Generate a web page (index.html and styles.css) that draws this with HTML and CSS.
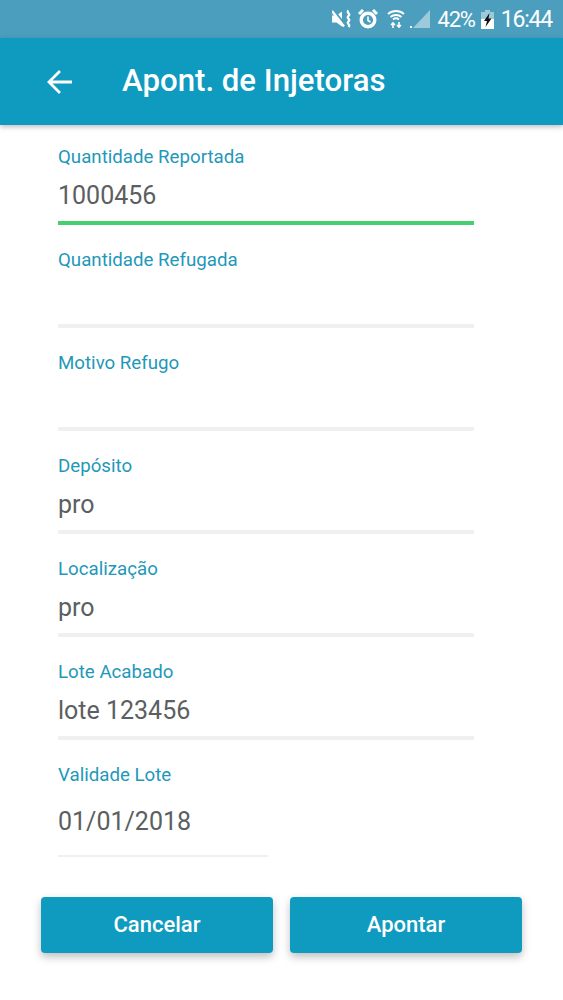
FILE: index.html
```html
<!DOCTYPE html>
<html lang="en">
<head>
  <meta charset="UTF-8" />
  <title>Apont. de Injetoras</title>
  <link rel="stylesheet" href="styles.css">
</head>
<body>
  <div class="status-bar">
    <!-- mute + vibrate -->
    <svg class="icon-mute" width="20" height="20" viewBox="0 0 20 20">
      <path d="M0 6.500h4.500L10 2.500v15l-5.500-4H0z" fill="#fff"/>
      <path d="M1 1 13 16.500" stroke="#4b9ebd" stroke-width="3" fill="none"/>
      <path d="M0 2 12 17.500" stroke="#fff" stroke-width="2.400" fill="none"/>
      <path d="M16.500 1.500c-2.800 2 2.800 3.500 0 5.500s2.800 3.500 0 5.500s2.800 3 0 5.500" stroke="#fff" stroke-width="2.200" fill="none"/>
    </svg>
    <!-- alarm -->
    <svg class="icon-alarm" width="20" height="20" viewBox="0 0 20 20">
      <circle cx="10" cy="11" r="6.800" fill="none" stroke="#fff" stroke-width="3.400"/>
      <path d="M10 7.500v4l2.500 1.500" stroke="#fff" stroke-width="1.600" fill="none"/>
      <path d="M1 5l4-4M19 5l-4-4" stroke="#fff" stroke-width="3" fill="none"/>
    </svg>
    <!-- wifi with arrows -->
    <svg class="icon-wifi" width="18" height="20" viewBox="0 0 18 20">
      <path d="M1 5c4.500-4 11.500-4 16 0M3.500 8c3-2.700 8-2.700 11 0M6 10.500c1.700-1.400 4.300-1.400 6 0" stroke="#fff" stroke-width="1.800" fill="none"/>
      <path d="M6 19v-5M4 16l2-2 2 2M12 13v5M10 16l2 2 2-2" stroke="#fff" stroke-width="1.600" fill="none"/>
    </svg>
    <!-- signal -->
    <svg class="icon-signal" width="20" height="20" viewBox="0 0 20 20">
      <path d="M20 1v18H3z" fill="#fff" opacity="0.45"/>
      <rect x="0" y="17" width="2" height="2" fill="#fff"/>
    </svg>
    <span class="status-text status-pct">42%</span>
    <!-- battery charging -->
    <svg class="icon-battery" width="13" height="20" viewBox="0 0 13 20">
      <path d="M4 1h5v2h4v17H0V3h4z" fill="#fff" opacity="0.45"/>
      <path d="M0 10h13v10H0z" fill="#fff"/>
      <path d="M8.500 4 3 12h3l-1.500 6L10.500 9.500h-3z" fill="#111"/>
    </svg>
    <span class="status-text">16:44</span>
  </div>

  <header class="app-bar">
    <svg class="back-icon" width="28" height="28" viewBox="0 0 28 28">
      <path d="M26 14H3M14 3 3 14l11 11" stroke="#fff" stroke-width="2.800" fill="none"/>
    </svg>
    <h1>Apont. de Injetoras</h1>
  </header>

  <main class="form">
    <div class="field field-active">
      <label>Quantidade Reportada</label>
      <div class="value">1000456</div>
    </div>
    <div class="field">
      <label>Quantidade Refugada</label>
      <div class="value"></div>
    </div>
    <div class="field">
      <label>Motivo Refugo</label>
      <div class="value"></div>
    </div>
    <div class="field">
      <label>Depósito</label>
      <div class="value">pro</div>
    </div>
    <div class="field">
      <label>Localização</label>
      <div class="value">pro</div>
    </div>
    <div class="field">
      <label>Lote Acabado</label>
      <div class="value">lote 123456</div>
    </div>
    <div class="field field-date">
      <label>Validade Lote</label>
      <div class="value">01/01/2018</div>
    </div>
  </main>

  <div class="actions">
    <button class="button">Cancelar</button>
    <button class="button">Apontar</button>
  </div>
</body>
</html>
```

FILE: styles.css
```css
* {
  margin: 0;
  padding: 0;
  box-sizing: border-box;
}

body {
  font-family: 'Roboto', sans-serif;
  background-color: #fff;
  width: 563px;
  height: 1000px;
  overflow: hidden;
}

.status-bar {
  height: 38px;
  background-color: #4b9ebd;
  display: flex;
  align-items: center;
  justify-content: flex-end;
  padding-right: 11px;
  color: #fff;
}

.status-text {
  font-size: 23px;
  letter-spacing: -1.2px;
}

.status-pct {
  font-size: 22px;
  letter-spacing: -1.2px;
}

.icon-mute {
  margin-right: 6px;
}

.icon-alarm {
  margin-right: 9px;
}

.icon-wifi {
  margin-right: 5px;
}

.icon-signal {
  margin-right: 7px;
}

.icon-battery {
  margin: 0 7px 0 6px;
}

.app-bar {
  height: 87px;
  background-color: #0f9abf;
  display: flex;
  align-items: center;
  padding-left: 46px;
  box-shadow: 0 2px 5px rgba(0, 0, 0, 0.25);
}

.back-icon {
  margin-right: 48px;
}

.app-bar h1 {
  font-size: 31.200px;
  font-weight: 500;
  color: #fff;
  margin-top: -2px;
}

.form {
  padding: 19px 0 0 58px;
}

.field {
  width: 416px;
  margin-bottom: 22px;
  border-bottom: 4px solid #f0f0f0;
}

.field label {
  display: block;
  height: 24px;
  line-height: 26px;
  font-size: 18.700px;
  color: #1f98b9;
}

.value {
  height: 53px;
  line-height: 55px;
  font-size: 25px;
  color: #5b5f61;
}

.field-active {
  border-bottom-color: #45cf70;
}

.field-date {
  width: 210px;
  border-bottom-width: 2px;
}

.field-date .value {
  height: 69px;
  line-height: 71px;
}

.actions {
  display: flex;
  gap: 17px;
  padding: 18px 0 0 41px;
}

.button {
  width: 232px;
  height: 56px;
  padding-bottom: 2px;
  background-color: #0f9abf;
  color: #fff;
  font-family: 'Roboto', sans-serif;
  font-size: 22px;
  font-weight: 500;
  border: none;
  border-radius: 4px;
  box-shadow: 0 4px 8px rgba(0, 0, 0, 0.25);
}
```
